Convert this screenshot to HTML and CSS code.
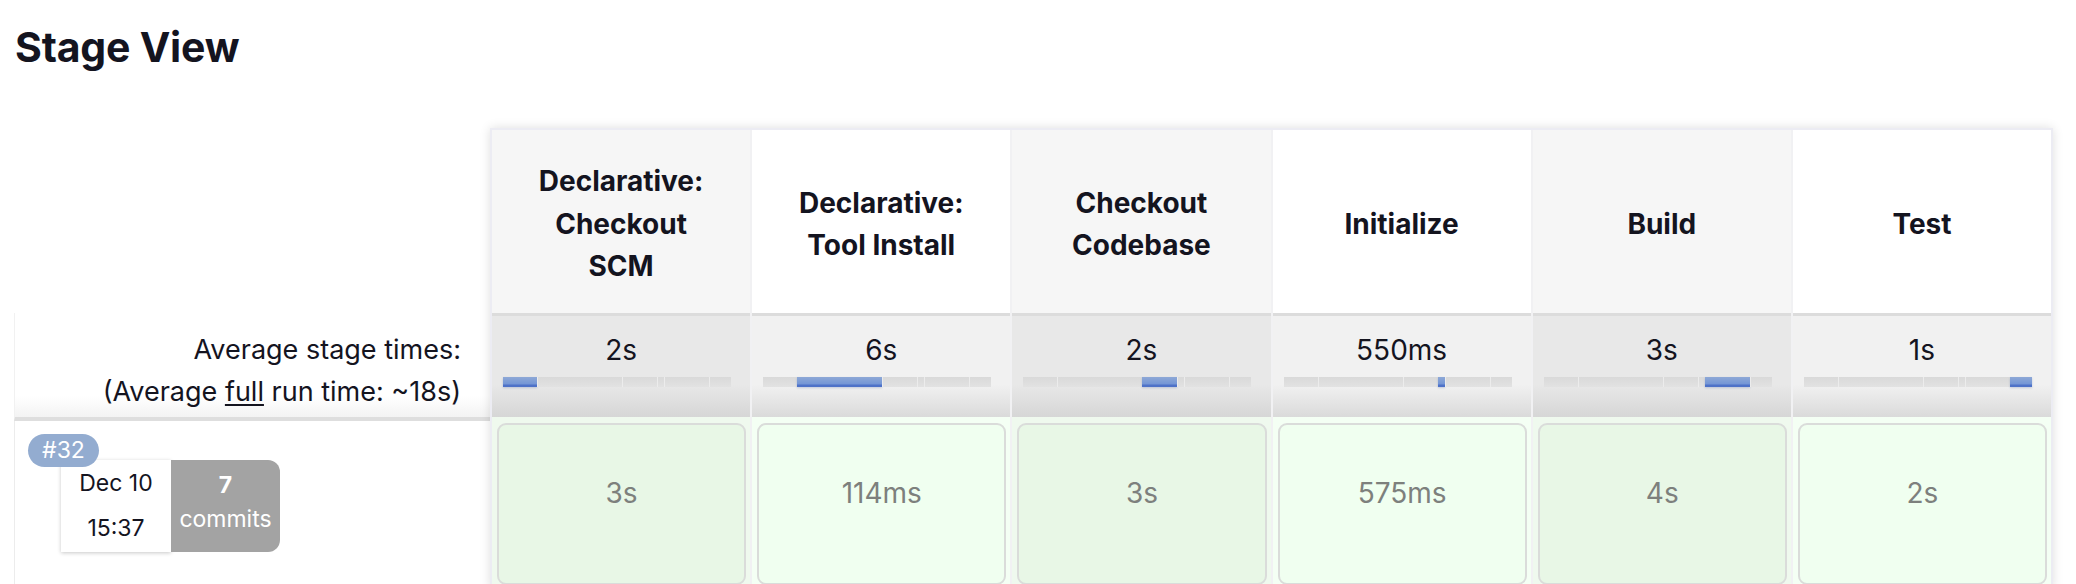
FILE: index.html
```html
<!DOCTYPE html>
<html lang="en">
<head>
<meta charset="utf-8">
<title>Stage View</title>
<link rel="stylesheet" href="styles.css">
</head>
<body>
<div class="page">
  <h2 class="title">Stage View</h2>
  <div class="stage-view">
    <div class="labels">
      <div class="label-head"></div>
      <div class="label-avg">
        <div>Average stage times:</div>
        <div>(Average <u>full</u> run time: ~18s)</div>
      </div>
      <div class="label-run">
        <span class="badge">#32</span>
        <div class="run-info">
          <div class="run-date"><div>Dec 10</div><div>15:37</div></div>
          <div class="run-commits"><div class="count">7</div><div>commits</div></div>
        </div>
      </div>
    </div>
    <div class="stages">
      <div class="stage odd">
        <div class="stage-head"><span>Declarative:<br>Checkout<br>SCM</span></div>
        <div class="stage-avg">
          <div>2s</div>
          <div class="bar">
            <span class="seg cur" style="width:34px"></span><span class="seg" style="width:85px"></span><span class="seg" style="width:35px"></span><span class="seg" style="width:7px"></span><span class="seg" style="width:45px"></span><span class="seg" style="width:22px"></span>
          </div>
        </div>
        <div class="stage-run"><div class="run-box">3s</div></div>
      </div>
      <div class="stage even">
        <div class="stage-head"><span>Declarative:<br>Tool Install</span></div>
        <div class="stage-avg">
          <div>6s</div>
          <div class="bar">
            <span class="seg" style="width:34px"></span><span class="seg cur" style="width:85px"></span><span class="seg" style="width:35px"></span><span class="seg" style="width:7px"></span><span class="seg" style="width:45px"></span><span class="seg" style="width:22px"></span>
          </div>
        </div>
        <div class="stage-run"><div class="run-box">114ms</div></div>
      </div>
      <div class="stage odd">
        <div class="stage-head"><span>Checkout<br>Codebase</span></div>
        <div class="stage-avg">
          <div>2s</div>
          <div class="bar">
            <span class="seg" style="width:34px"></span><span class="seg" style="width:85px"></span><span class="seg cur" style="width:35px"></span><span class="seg" style="width:7px"></span><span class="seg" style="width:45px"></span><span class="seg" style="width:22px"></span>
          </div>
        </div>
        <div class="stage-run"><div class="run-box">3s</div></div>
      </div>
      <div class="stage even">
        <div class="stage-head"><span>Initialize</span></div>
        <div class="stage-avg">
          <div>550ms</div>
          <div class="bar">
            <span class="seg" style="width:34px"></span><span class="seg" style="width:85px"></span><span class="seg" style="width:35px"></span><span class="seg cur" style="width:7px"></span><span class="seg" style="width:45px"></span><span class="seg" style="width:22px"></span>
          </div>
        </div>
        <div class="stage-run"><div class="run-box">575ms</div></div>
      </div>
      <div class="stage odd">
        <div class="stage-head"><span>Build</span></div>
        <div class="stage-avg">
          <div>3s</div>
          <div class="bar">
            <span class="seg" style="width:34px"></span><span class="seg" style="width:85px"></span><span class="seg" style="width:35px"></span><span class="seg" style="width:7px"></span><span class="seg cur" style="width:45px"></span><span class="seg" style="width:22px"></span>
          </div>
        </div>
        <div class="stage-run"><div class="run-box">4s</div></div>
      </div>
      <div class="stage even">
        <div class="stage-head"><span>Test</span></div>
        <div class="stage-avg">
          <div>1s</div>
          <div class="bar">
            <span class="seg" style="width:34px"></span><span class="seg" style="width:85px"></span><span class="seg" style="width:35px"></span><span class="seg" style="width:7px"></span><span class="seg" style="width:45px"></span><span class="seg cur" style="width:22px"></span>
          </div>
        </div>
        <div class="stage-run"><div class="run-box">2s</div></div>
      </div>
    </div>
  </div>
</div>
</body>
</html>
```
FILE: styles.css
```css
* { box-sizing: border-box; }

html, body {
  margin: 0;
  background: #ffffff;
}

body {
  font-family: Inter, "Noto Sans", "Liberation Sans", sans-serif;
  color: #14141f;
  overflow: hidden;
}

.page {
  padding: 26px 0 0 14px;
}

.title {
  margin: 0;
  padding-left: 1px;
  font-size: 41px;
  line-height: 42px;
  font-weight: 700;
  letter-spacing: -0.2px;
}

.stage-view {
  display: flex;
  align-items: flex-start;
  margin-top: 60px;
}

/* left label column */
.labels {
  width: 476px;
  flex: none;
  display: flex;
  flex-direction: column;
}

.label-head {
  height: 185px;
}

.label-avg {
  height: 108px;
  padding: 16px 29px 0 0;
  text-align: right;
  font-size: 27px;
  line-height: 42px;
  border-left: 1px solid #f1f1f1;
  border-bottom: 4px solid #dedede;
  background: linear-gradient(to bottom, #ffffff 80%, #f3f3f3 100%);
}

.label-avg u {
  text-underline-offset: 3px;
}

.label-run {
  position: relative;
  height: 170px;
  border-left: 1px solid #ececec;
  padding: 39px 0 0 46px;
}

.badge {
  position: absolute;
  left: 13px;
  top: 13px;
  z-index: 2;
  width: 71px;
  height: 33px;
  border-radius: 17px;
  background: #93acd0;
  color: #ffffff;
  font-size: 23px;
  line-height: 33px;
  text-align: center;
}

.run-info {
  display: flex;
  height: 92px;
}

.run-date {
  width: 110px;
  background: #ffffff;
  box-shadow: 0 1px 4px rgba(0, 0, 0, 0.22);
  font-size: 23px;
  line-height: 23px;
  text-align: center;
  display: flex;
  flex-direction: column;
  justify-content: space-between;
  padding: 12px 0 12px;
}

.run-commits {
  width: 109px;
  background: #a3a3a3;
  border-radius: 0 12px 12px 0;
  color: #ffffff;
  font-size: 23px;
  line-height: 22px;
  text-align: center;
  padding-top: 14px;
}

.run-commits .count {
  font-weight: 700;
  font-size: 23px;
  margin-bottom: 12px;
}

/* stage table */
.stages {
  width: 1563px;
  flex: none;
  display: flex;
  gap: 2px;
  border: 2px solid #ececf3;
  background: #f1f1f3;
  box-shadow: 0 0 10px rgba(0, 0, 0, 0.13);
}

.stage {
  flex: 1 1 0;
  min-width: 0;
  display: flex;
  flex-direction: column;
}

.stage-head {
  height: 183px;
  padding-top: 5px;
  display: flex;
  align-items: center;
  justify-content: center;
  text-align: center;
  font-size: 28px;
  line-height: 42.5px;
  font-weight: 700;
}

.odd .stage-head { background: #f6f6f6; }
.even .stage-head { background: #ffffff; }

.stage-avg {
  height: 104px;
  border-top: 3px solid #dcdcdc;
  padding-top: 13px;
  text-align: center;
  font-size: 28px;
  line-height: 42px;
}

.odd .stage-avg { background: linear-gradient(to bottom, #e8e8e8 68%, #d6d6d6 100%); }
.even .stage-avg { background: linear-gradient(to bottom, #f1f1f1 68%, #dadada 100%); }

.bar {
  display: flex;
  width: 228px;
  height: 10px;
  margin: 6px 0 0 11px;
}

.seg {
  height: 10px;
  background: linear-gradient(to bottom, #d9d9d9, #e2e2e2);
  border-left: 1px solid #ececec;
}

.seg:first-child { border-left: none; }

.seg.cur {
  border-left: none;
  background: linear-gradient(to bottom, #8ea8d6 0%, #7496d6 70%, #4e72c8 80%, #4e72c8 100%);
  box-shadow: 0 1px 2px rgba(60, 90, 160, 0.25);
}

.stage-run {
  height: 170px;
  padding: 6px 4px 0 5px;
}

.odd .stage-run { background: #eff9ee; }
.even .stage-run { background: #f4fff4; }

.run-box {
  height: 162px;
  border: 2px solid #dadcda;
  border-radius: 9px;
  padding-top: 47px;
  text-align: center;
  font-size: 28px;
  line-height: 42px;
  color: #7d807d;
}

.odd .run-box { background: #e8f7e6; }
.even .run-box { background: #f0fff0; }
```
